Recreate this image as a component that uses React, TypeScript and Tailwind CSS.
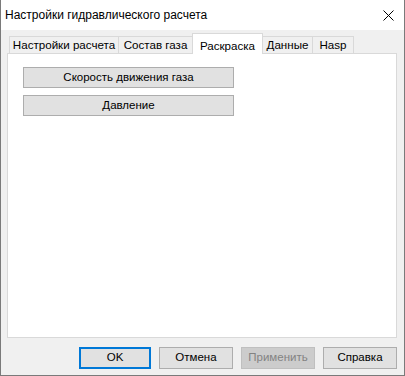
import React from "react";

const tabs = [
  { label: "Настройки расчета", w: "w-[110px]" },
  { label: "Состав газа", w: "w-[75px]" },
  { label: "Раскраска", w: "w-[71px]", active: true },
  { label: "Данные", w: "w-[51px]" },
  { label: "Hasp", w: "w-[42px]" },
];

function Btn({ children, className = "" }: { children: React.ReactNode; className?: string }) {
  return (
    <div
      className={`flex items-center justify-center border border-[#adadad] bg-[#e1e1e1] text-[11.5px] text-black ${className}`}
    >
      {children}
    </div>
  );
}

export default function App() {
  return (
    <div
      className="w-[405px] h-[376px] flex flex-col bg-[#f0f0f0] border-l border-r border-b border-[#7a7a7a] text-black"
      style={{ fontFamily: '"Liberation Sans", Arial, sans-serif' }}
    >
      <div className="h-[30px] bg-white flex items-center justify-between pl-[4px] pr-[10px]">
        <span className="text-[12px] leading-none">Настройки гидравлического расчета</span>
        <svg width="11" height="11" viewBox="0 0 11 11" className="mt-[1px]">
          <path d="M0.5 0.5L10.5 10.5M10.5 0.5L0.5 10.5" stroke="#000" strokeWidth="1" />
        </svg>
      </div>
      <div className="pl-[6px] pr-[7px] pt-[3px]">
        <div className="flex items-end h-[20px] pl-[2px]">
          {tabs.map((t, i) =>
            t.active ? (
              <div
                key={t.label}
                className={`${t.w} h-[21px] -mb-px -ml-px relative z-10 bg-white border-t border-l border-r border-[#d9d9d9] flex items-start justify-center pt-[3px] text-[11.6px]`}
              >
                {t.label}
              </div>
            ) : (
              <div
                key={t.label}
                className={`${t.w} h-[17px] ${i > 0 ? "-ml-px" : ""} bg-[#f0f0f0] border-t border-l border-r border-[#d9d9d9] flex items-center justify-center text-[11.6px]`}
              >
                {t.label}
              </div>
            )
          )}
        </div>
        <div className="h-[285px] bg-white border border-[#d9d9d9] pt-[13px] pl-[15px] flex flex-col gap-[7px]">
          <Btn className="w-[211px] h-[21px]">Скорость движения газа</Btn>
          <Btn className="w-[211px] h-[21px]">Давление</Btn>
        </div>
      </div>
      <div className="flex justify-end gap-[8px] pr-[7px] pt-[9px]">
        <Btn className="w-[72px] h-[22px] !border-2 !border-[#0078d7]">OK</Btn>
        <Btn className="w-[74px] h-[22px]">Отмена</Btn>
        <div className="w-[74px] h-[22px] flex items-center justify-center border border-[#bfbfbf] bg-[#cccccc] text-[11.5px] text-[#838383]">
          Применить
        </div>
        <Btn className="w-[74px] h-[22px]">Справка</Btn>
      </div>
    </div>
  );
}
